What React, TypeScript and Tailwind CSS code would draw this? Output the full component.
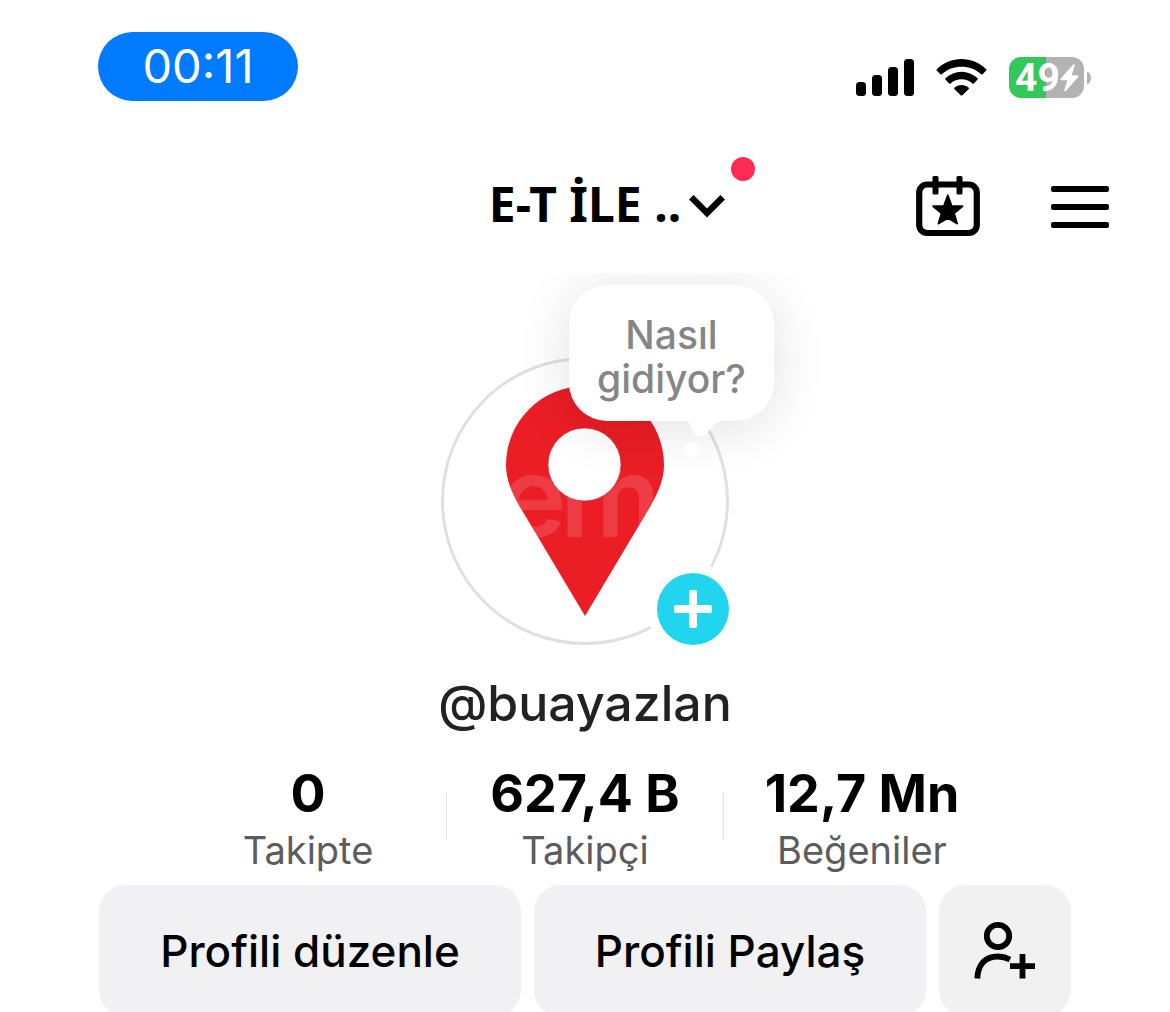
import { Fragment } from "react";

const stats = [
  { value: "0", label: "Takipte" },
  { value: "627,4 B", label: "Takipçi" },
  { value: "12,7 Mn", label: "Beğeniler" },
];

function StatusBar() {
  return (
    <div className="flex items-end justify-between pr-[79px] pl-[98px]">
      <time className="flex h-[69px] w-[200px] items-center justify-center rounded-full bg-[#007aff] text-[47px] text-white">
        00:11
      </time>
      <div className="mb-[3px] flex items-center">
        <svg width="58" height="37" viewBox="0 0 58 37" aria-label="Sinyal" className="mr-[22px]">
          <rect x="0" y="23" width="10" height="14" rx="3.5" />
          <rect x="16" y="16" width="10" height="21" rx="3.5" />
          <rect x="32" y="8" width="10" height="29" rx="3.5" />
          <rect x="48" y="0" width="10" height="37" rx="3.5" />
        </svg>
        <svg width="51" height="37" viewBox="0 0 51 37" aria-label="Wi-Fi" className="mr-[22px]">
          <path d="M0.8 10.200 C14.5 -3.400 36.5 -3.400 50.2 10.200 Q50.8 10.900 50.2 11.500 L46.600 15.200 Q45.900 15.800 45.200 15.200 C34 5.400 17 5.400 5.800 15.200 Q5.100 15.800 4.400 15.200 L0.800 11.500 Q0.200 10.900 0.800 10.200 Z" />
          <path d="M9.400 19.300 C18.500 10.400 32.500 10.400 41.600 19.300 Q42.200 20 41.600 20.600 L37.900 24.400 Q37.200 25 36.500 24.400 C30 18.800 21 18.800 14.500 24.400 Q13.800 25 13.100 24.400 L9.400 20.600 Q8.800 20 9.400 19.300 Z" />
          <path d="M18.300 28.700 C22.500 25 28.500 25 32.700 28.700 Q33.300 29.300 32.700 30 L26.300 36.300 Q25.500 37 24.700 36.300 L18.300 30 Q17.700 29.300 18.300 28.700 Z" />
        </svg>
        <div className="flex items-center gap-[3px]">
          <div className="flex h-[41px] w-[75px] items-center rounded-xl bg-linear-to-r from-[#34c759] from-49% to-[#b3b3b3] to-49% pl-[6px] text-white">
            <span className="font-['Roboto'] text-[39px] leading-10 font-bold">49</span>
            <svg width="19" height="28" viewBox="0 0 19 28" fill="currentColor" aria-hidden="true">
              <path d="M13.200 0.600 L0.800 14.600 Q0 16 1.500 16.200 L7.400 16.200 L4.300 26 Q4 28 5.800 27 L18.200 13 Q19 11.500 17.500 11.300 L11.700 11.300 L14.700 1.800 Q14.800 -0.400 13.200 0.600 Z" />
            </svg>
          </div>
          <svg width="4" height="14" viewBox="0 0 4 14" fill="#b3b3b3" aria-hidden="true">
            <path d="M0 0.500 C5.300 2.500 5.300 11.500 0 13.500 Z" />
          </svg>
        </div>
      </div>
    </div>
  );
}

function Header() {
  return (
    <header className="mt-[45px] grid h-[122px] grid-cols-[1fr_auto_1fr] items-center px-[61px]">
      <button type="button" className="relative col-start-2 flex items-center gap-2 pl-[44px]">
        <span className="mb-[7px] font-['Noto_Sans'] text-[48px] leading-[60px] font-bold whitespace-nowrap">
          E-T İLE ..
        </span>
        <svg width="36" height="24" viewBox="0 0 36 24" fill="none" stroke="#000" strokeWidth="6.500" aria-hidden="true">
          <path d="M2.300 2.300 L18 18 L33.700 2.300" />
        </svg>
        <span className="absolute -top-[17px] -right-[30px] size-6 rounded-full bg-[#fe2c55]" />
      </button>
      <div className="flex items-center justify-end gap-[71px]">
        <button type="button" aria-label="Takvim">
          <svg width="64" height="62" viewBox="0 0 64 62" className="block">
            <rect x="3.200" y="8.500" width="57.600" height="48.500" rx="8" fill="none" stroke="#000" strokeWidth="6.200" />
            <rect x="16.500" y="0" width="6" height="18.500" rx="1.500" />
            <rect x="40.500" y="0" width="6" height="18.500" rx="1.500" />
            <path
              d="M31.800 19.500 L35.600 30 L46.400 30.300 L38 37.200 L41 47.500 L31.800 41.800 L22.600 47.500 L25.600 37.200 L17.200 30.300 L28 30 Z"
              stroke="#000"
              strokeWidth="2"
              strokeLinejoin="round"
            />
          </svg>
        </button>
        <button type="button" aria-label="Menü">
          <svg width="58" height="42" viewBox="0 0 58 42" className="block">
            <rect width="58" height="6" rx="2" />
            <rect y="18" width="58" height="6" rx="2" />
            <rect y="36" width="58" height="6" rx="2" />
          </svg>
        </button>
      </div>
    </header>
  );
}

function Avatar() {
  return (
    <div className="relative mx-auto mt-[89px] size-72">
      <svg viewBox="0 0 288 288" className="size-72" role="img" aria-label="Profil fotoğrafı">
        <defs>
          <clipPath id="pin">
            <path d="M144 259 L82 155 C71 137 65 123 65 108 A79 79 0 0 1 223 108 C223 123 217 137 206 155 Z" />
          </clipPath>
        </defs>
        <circle cx="144" cy="144" r="142.500" fill="#fff" stroke="#e0e0e0" strokeWidth="3" />
        <g clipPath="url(#pin)">
          <rect width="288" height="288" fill="#eb1d25" />
          <g fontSize="112" fontFamily="Inter" fontWeight="600" fill="#fff" fillOpacity="0.140">
            <text x="59" y="180">
              e
            </text>
            <text x="119" y="180">
              m
            </text>
          </g>
        </g>
        <circle cx="143.500" cy="107.500" r="36.500" fill="#fff" stroke="#b9322f" strokeOpacity="0.600" strokeWidth="1" />
      </svg>
      <div className="absolute -top-[84px] left-[80px] h-[320px] w-[320px] overflow-hidden pt-3 pl-[48px]">
        <button
          type="button"
          className="flex h-[136px] w-[205px] flex-col items-center justify-center rounded-[38px] bg-white pt-[7px] text-[39px] leading-[44px] font-medium text-[#868686] shadow-[0_6px_54px_rgba(0,0,0,0.12)]"
        >
          <span>Nasıl</span>
          <span>gidiyor?</span>
        </button>
        <svg width="40" height="38" viewBox="0 0 40 38" fill="#fff" className="ml-[114px]" aria-hidden="true">
          <path d="M0 0 C6 0 7 2 8 6 C10 13 13 15 18 15 C22 15 24 12 27 9 L30 5 C33 1.500 36 0 40 0 Z" />
          <circle cx="8.500" cy="28.500" r="7.500" />
        </svg>
      </div>
      <button
        type="button"
        aria-label="Hikâye ekle"
        className="absolute right-0 bottom-0 flex size-[72px] items-center justify-center rounded-full bg-[#22d5ee] ring-[10px] ring-white"
      >
        <svg width="38" height="38" viewBox="0 0 38 38" fill="#fff" aria-hidden="true">
          <rect x="15" width="8" height="38" rx="2" />
          <rect y="15" width="38" height="8" rx="2" />
        </svg>
      </button>
    </div>
  );
}

export default function App() {
  return (
    <main className="min-h-screen bg-white pt-8 font-['Inter',sans-serif] text-black">
      <StatusBar />
      <Header />
      <Avatar />
      <h1 className="mt-7 text-center text-[50px] leading-[60px] font-medium text-[#222]">@buayazlan</h1>
      <div className="mx-auto mt-8 flex w-full max-w-[830px]">
        {stats.map((s, i) => (
          <Fragment key={s.label}>
            {i > 0 && <div className="mt-[27px] h-12 w-px bg-[#e2e2e2]" />}
            <a href="#" className="flex flex-1 basis-0 flex-col items-center">
              <span className="text-[52px] leading-[58px] font-bold">{s.value}</span>
              <span className="text-[38px] leading-[54px] text-[#5c5c5c]">{s.label}</span>
            </a>
          </Fragment>
        ))}
      </div>
      <div className="mt-2 grid grid-cols-[422fr_392fr_132fr] gap-[13px] px-[99px] text-[44px] font-medium">
        <button type="button" className="h-[131px] rounded-[26px] bg-[#f1f1f3]">
          Profili düzenle
        </button>
        <button type="button" className="rounded-[26px] bg-[#f1f1f3]">
          Profili Paylaş
        </button>
        <button type="button" aria-label="Arkadaş ekle" className="flex items-center justify-center rounded-[26px] bg-[#f1f1f1]">
          <svg width="62" height="60" viewBox="0 0 62 60" fill="none" stroke="#000" strokeWidth="5.800" aria-hidden="true">
            <circle cx="24" cy="15" r="11.200" />
            <path d="M3.300 57.500 C4 42 12 35.500 24 35.500 C29 35.500 32 36.500 36 38.500" />
            <path d="M48.500 33 V57.500 M36 45.200 H61" />
          </svg>
        </button>
      </div>
    </main>
  );
}
